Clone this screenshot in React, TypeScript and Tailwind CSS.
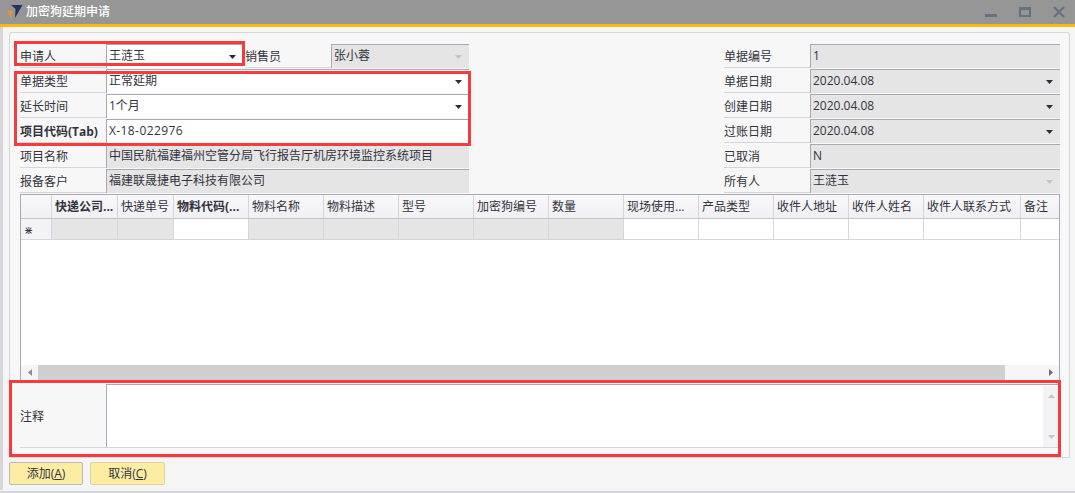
const font = "font-['Open_Sans','Noto_Sans_CJK_SC',sans-serif]";

function Arrow({ muted }: { muted?: boolean }) {
    return (
        <svg width="7" height="4" viewBox="0 0 7 4" className="absolute right-[7px] top-[10px]">
            <path d="M0 0h7L3.5 4z" fill={muted ? "#c4c4ca" : "#2c2c3c"} />
        </svg>
    );
}

function Field({
    value,
    gray,
    arrow,
    muted,
    className,
}: {
    value?: string;
    gray?: boolean;
    arrow?: boolean;
    muted?: boolean;
    className?: string;
}) {
    return (
        <div
            className={`relative h-[24px] border-t border-l border-[#a9a9b5] pl-[2px] text-[12px] leading-[22px] text-[#33333d] whitespace-nowrap ${
                gray ? "bg-[#e5e5e5]" : "bg-white"
            } ${className ?? "flex-1"}`}
        >
            {value}
            {arrow && <Arrow muted={muted} />}
        </div>
    );
}

function Label({ text, bold }: { text: string; bold?: boolean }) {
    return (
        <div
            className={`w-[86px] h-[24px] shrink-0 border-b border-[#d5d5dc] text-[12px] leading-[26px] text-[#33333d] whitespace-nowrap ${
                bold ? "font-bold" : ""
            }`}
        >
            {text}
        </div>
    );
}

function Row({ children }: { children: React.ReactNode }) {
    return <div className="flex h-[25px]">{children}</div>;
}

const columns = [
    { title: "", w: "w-[31px]", kind: "mark" },
    { title: "快递公司...", w: "w-[66px]", kind: "gray", bold: true },
    { title: "快递单号", w: "w-[56px]", kind: "gray" },
    { title: "物料代码(...", w: "w-[75px]", kind: "white", bold: true },
    { title: "物料名称", w: "w-[75px]", kind: "gray" },
    { title: "物料描述", w: "w-[75px]", kind: "gray" },
    { title: "型号", w: "w-[75px]", kind: "gray" },
    { title: "加密狗编号", w: "w-[75px]", kind: "gray" },
    { title: "数量", w: "w-[75px]", kind: "gray" },
    { title: "现场使用...", w: "w-[75px]", kind: "white" },
    { title: "产品类型", w: "w-[75px]", kind: "white" },
    { title: "收件人地址", w: "w-[75px]", kind: "white" },
    { title: "收件人姓名", w: "w-[75px]", kind: "white" },
    { title: "收件人联系方式", w: "w-[97px]", kind: "white" },
    { title: "备注", w: "flex-1", kind: "white" },
];

function MatrixGrid() {
    return (
        <div className="h-[187px] border-t border-l border-r border-[#a9a9b5] bg-white flex flex-col">
            <div className="flex h-[24px] bg-gradient-to-b from-[#f8f8fa] to-[#f0f0f4] border-b border-[#c4c4cc]">
                {columns.map((c, i) => (
                    <div
                        key={i}
                        className={`${c.w} border-r border-[#d5d5dc] pl-[3px] text-[12px] leading-[23px] text-[#33333d] whitespace-nowrap overflow-hidden ${
                            c.bold ? "font-bold" : ""
                        } last:border-r-0`}
                    >
                        {c.title}
                    </div>
                ))}
            </div>
            <div className="flex h-[21px] border-b border-[#d5d5dc]">
                {columns.map((c, i) => (
                    <div
                        key={i}
                        className={`${c.w} border-r border-[#d5d5dc] last:border-r-0 ${
                            c.kind === "mark"
                                ? "bg-[#f3f3f6] pl-[3px] text-[11px] leading-[22px] text-[#33333d]"
                                : c.kind === "gray"
                                  ? "bg-[#e5e5e5]"
                                  : "bg-white"
                        }`}
                    >
                        {c.kind === "mark" ? "⋇" : ""}
                    </div>
                ))}
            </div>
            <div className="flex-1" />
            <div className="flex h-[15px] mb-[1px] bg-[#f5f5f7] items-center">
                <div className="w-[17px] flex justify-center">
                    <svg width="4" height="7" viewBox="0 0 4 7">
                        <path d="M4 0v7L0 3.5z" fill="#8a8a98" />
                    </svg>
                </div>
                <div className="w-[967px] h-full bg-[#cfcfcf]" />
                <div className="flex-1 flex justify-end pr-[6px]">
                    <svg width="4" height="7" viewBox="0 0 4 7">
                        <path d="M0 0v7l4-3.5z" fill="#6c6c7c" />
                    </svg>
                </div>
            </div>
        </div>
    );
}

export default function App() {
    return (
        <div className={`relative w-[1075px] h-[493px] overflow-hidden bg-[#f5f5f5] ${font}`}>
            <div className="flex items-center h-[27px] bg-[#969696] border-b-[3px] border-[#fdb714]">
                <svg width="16" height="14" viewBox="0 0 16 14" className="ml-[7px] mb-[2px]">
                    <path d="M4 1h11.5L8 14l.5-9z" fill="#27335f" />
                    <path d="M0 7h6l-2 7z" fill="#e8942c" />
                </svg>
                <div className="ml-[3px] text-[12px] font-medium text-white">加密狗延期申请</div>
                <div className="ml-auto flex items-center gap-[22px] pr-[10px]">
                    <div className="w-[12px] h-[3px] mt-[7px] bg-[#677083]" />
                    <div className="w-[12px] h-[10px] border-2 border-t-[3px] border-[#677083]" />
                    <svg width="12" height="12" viewBox="0 0 12 12">
                        <path d="M1 1l10 10M11 1L1 11" stroke="#677083" strokeWidth="2.4" />
                    </svg>
                </div>
            </div>

            <div className="flex h-[463px]">
                <div className="w-[3px] bg-[#d5d5da]" />
                <div className="flex-1 flex flex-col pl-[6px] pr-[5px] pt-[5px]">
                    <div className="h-[426px] rounded-t-[3px] border border-[#d5d5dc] bg-[#f7f7f7] pt-[11px] pl-[10px] pr-[9px]">
                        <div className="flex justify-between">
                            <div className="w-[449px]">
                                <Row>
                                    <Label text="申请人" />
                                    <Field value="王涟玉" arrow className="w-[137px]" />
                                    <div className="w-[2px]" />
                                    <Label text="销售员" />
                                    <Field value="张小蓉" gray arrow muted />
                                </Row>
                                <Row>
                                    <Label text="单据类型" />
                                    <Field value="正常延期" arrow />
                                </Row>
                                <Row>
                                    <Label text="延长时间" />
                                    <Field value="1个月" arrow />
                                </Row>
                                <Row>
                                    <Label text="项目代码(Tab)" bold />
                                    <Field value="X-18-022976" className="flex-1 tracking-[0.4px]" />
                                </Row>
                                <Row>
                                    <Label text="项目名称" />
                                    <Field value="中国民航福建福州空管分局飞行报告厅机房环境监控系统项目" gray />
                                </Row>
                                <Row>
                                    <Label text="报备客户" />
                                    <Field value="福建联晟捷电子科技有限公司" gray />
                                </Row>
                            </div>
                            <div className="w-[336px]">
                                <Row>
                                    <Label text="单据编号" />
                                    <Field value="1" gray />
                                </Row>
                                <Row>
                                    <Label text="单据日期" />
                                    <Field value="2020.04.08" gray arrow />
                                </Row>
                                <Row>
                                    <Label text="创建日期" />
                                    <Field value="2020.04.08" gray arrow />
                                </Row>
                                <Row>
                                    <Label text="过账日期" />
                                    <Field value="2020.04.08" gray arrow />
                                </Row>
                                <Row>
                                    <Label text="已取消" />
                                    <Field value="N" gray />
                                </Row>
                                <Row>
                                    <Label text="所有人" />
                                    <Field value="王涟玉" gray arrow muted />
                                </Row>
                            </div>
                        </div>
                        <MatrixGrid />
                        <div className="flex h-[64px] mt-[3px] border-b border-[#d5d5dc]">
                            <div className="w-[86px] text-[12px] leading-[66px] text-[#33333d]">注释</div>
                            <div className="flex-1 flex justify-end border-l border-t border-[#a9a9b5] bg-white">
                                <div className="w-[17px] mt-[1px] bg-[#f3f3f6] flex flex-col items-center justify-between py-[8px]">
                                    <svg width="7" height="4" viewBox="0 0 7 4">
                                        <path d="M0 4h7L3.5 0z" fill="#c4c4ca" />
                                    </svg>
                                    <svg width="7" height="4" viewBox="0 0 7 4">
                                        <path d="M0 0h7L3.5 4z" fill="#c4c4ca" />
                                    </svg>
                                </div>
                            </div>
                        </div>
                    </div>
                    <div className="flex gap-[7px] mt-[4px]">
                        <button className="w-[74px] h-[23px] rounded-[2px] border border-[#b9b9c0] bg-[#fdeda3] text-[12px] leading-[21px] text-[#33333d]">
                            添加(<span className="underline">A</span>)
                        </button>
                        <button className="w-[75px] h-[23px] rounded-[2px] border border-[#dcd3a0] bg-[#fdeda3] text-[12px] leading-[21px] text-[#33333d]">
                            取消(<span className="underline">C</span>)
                        </button>
                    </div>
                </div>
            </div>
            <div className="absolute left-0 right-0 bottom-0 h-[2px] bg-[#d5d5da]" />

            <div className="absolute left-[14px] top-[41px] w-[231px] h-[25px] border-[3px] border-[#f83a3a]" />
            <div className="absolute left-[14px] top-[71px] w-[457px] h-[75px] border-[3px] border-[#f83a3a]" />
            <div className="absolute left-[9px] top-[380px] w-[1052px] h-[77px] border-[3px] border-[#f83a3a]" />
        </div>
    );
}
